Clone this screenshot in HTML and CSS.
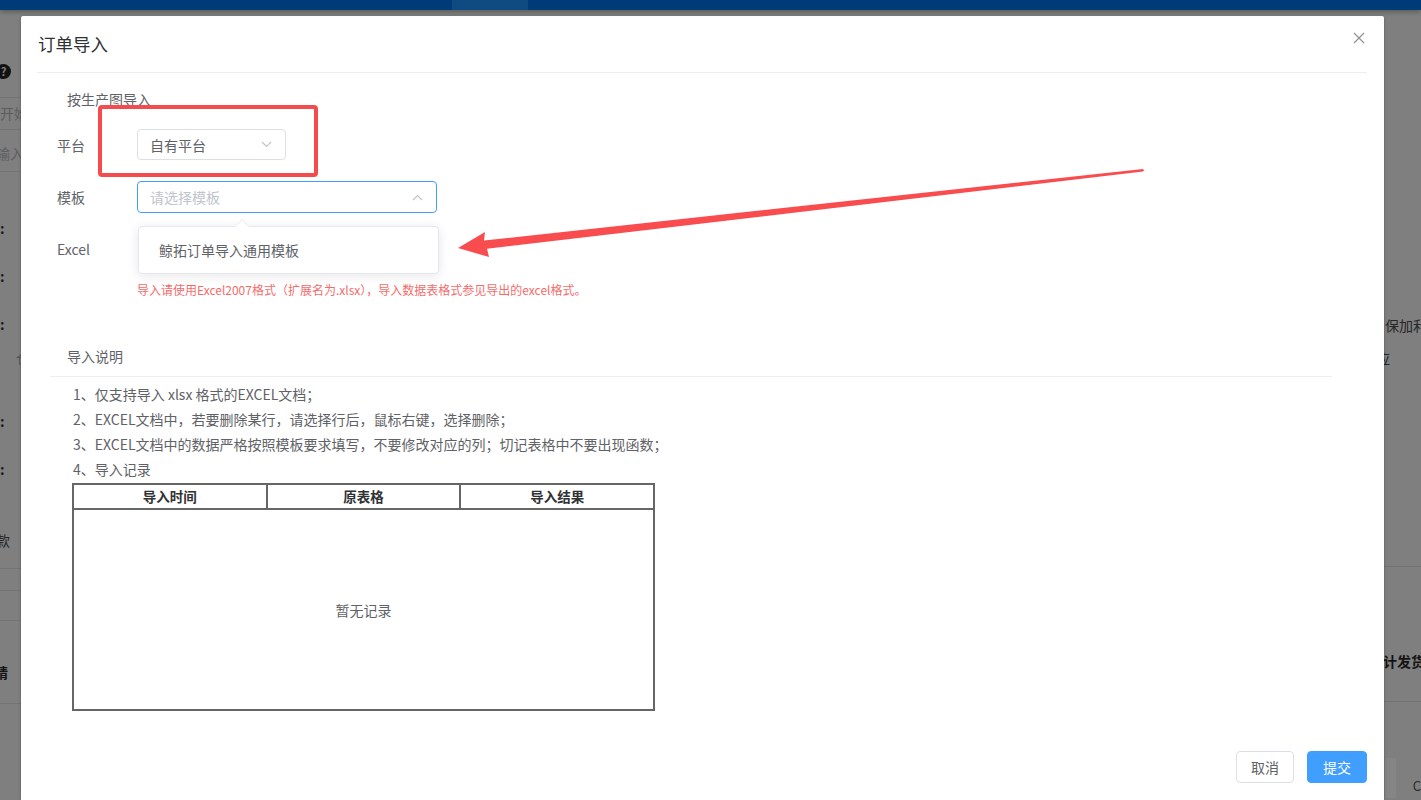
FILE: index.html
```html
<!DOCTYPE html>
<html lang="zh-CN">
<head>
<meta charset="utf-8">
<title>订单导入</title>
<link rel="stylesheet" href="styles.css">
</head>
<body>
<div class="page">
  <div class="topbar"><div class="topbar-tab"></div></div>
  <div class="page-body">
    <div class="strip strip-left">
      <div class="blk h50"></div>
      <div class="blk h16"><span class="help-icon">?</span></div>
      <div class="blk h21"></div>
      <div class="hline"></div>
      <div class="blk h31 txt-ph ml-0">开始</div>
      <div class="hline"></div>
      <div class="blk h41 txt-ph ml-n4 pt5">输入</div>
      <div class="hline"></div>
      <div class="blk h32"></div>
      <div class="blk h48 txt-colon">:</div>
      <div class="blk h48 txt-colon">:</div>
      <div class="blk h48 txt-colon">:</div>
      <div class="blk h20 txt-faint ml-16">仓</div>
      <div class="blk h29"></div>
      <div class="blk h48 txt-colon">:</div>
      <div class="blk h48 txt-colon">:</div>
      <div class="blk h35"></div>
      <div class="blk h24 txt-dark ml-n4">款</div>
      <div class="blk h16"></div>
      <div class="hline"></div>
      <div class="blk h21"></div>
      <div class="hline"></div>
      <div class="blk h29"></div>
      <div class="hline"></div>
      <div class="blk h39"></div>
      <div class="blk h24 txt-bold ml-n6">精</div>
      <div class="blk h19"></div>
      <div class="hline"></div>
    </div>
    <div class="strip strip-right">
      <div class="blk h303"></div>
      <div class="blk h24 txt-dark ml-1">保加利亚</div>
      <div class="blk h9"></div>
      <div class="blk h24 txt-dark ml-n8">应</div>
      <div class="blk h196"></div>
      <div class="hline"></div>
      <div class="blk h82"></div>
      <div class="blk h24 txt-bold ml-n1">计发货</div>
      <div class="blk h28"></div>
      <div class="hline"></div>
      <div class="blk h56"></div>
      <div class="blk h40 bottom-row"><span class="ghost-box"></span><span class="ghost-c">C</span></div>
    </div>
  </div>
</div>

<div class="dialog">
  <div class="dialog-header">
    <span class="dialog-title">订单导入</span>
    <span class="dialog-close">
      <svg width="12" height="12" viewBox="0 0 12 12"><path d="M1 1L11 11M11 1L1 11" stroke="#909399" stroke-width="1.3" fill="none"/></svg>
    </span>
  </div>
  <div class="dialog-body">
    <div class="tab-label">按生产图导入</div>
    <div class="form">
      <div class="form-row">
        <label class="form-label">平台</label>
        <div class="form-content">
          <div class="select select-sm">
            <span class="select-value">自有平台</span>
            <svg class="chev" width="11" height="7" viewBox="0 0 11 7"><path d="M1 1L5.5 5.5L10 1" stroke="#c0c4cc" stroke-width="1.2" fill="none"/></svg>
          </div>
        </div>
      </div>
      <div class="form-row">
        <label class="form-label">模板</label>
        <div class="form-content">
          <div class="select select-lg is-focus">
            <span class="select-placeholder">请选择模板</span>
            <svg class="chev" width="11" height="7" viewBox="0 0 11 7"><path d="M1 6L5.5 1.5L10 6" stroke="#c0c4cc" stroke-width="1.2" fill="none"/></svg>
            <div class="dropdown">
              <span class="dropdown-arrow"></span>
              <div class="dropdown-item">鲸拓订单导入通用模板</div>
            </div>
          </div>
        </div>
      </div>
      <div class="form-row">
        <label class="form-label">Excel</label>
        <div class="form-content"></div>
      </div>
      <div class="form-hint">导入请使用Excel2007格式（扩展名为.xlsx），导入数据表格式参见导出的excel格式。</div>
    </div>

    <div class="notes">
      <div class="notes-title">导入说明</div>
      <ul class="notes-list">
        <li>1、仅支持导入 xlsx 格式的EXCEL文档；</li>
        <li>2、EXCEL文档中，若要删除某行，请选择行后，鼠标右键，选择删除；</li>
        <li>3、EXCEL文档中的数据严格按照模板要求填写，不要修改对应的列；切记表格中不要出现函数；</li>
        <li>4、导入记录</li>
      </ul>
      <table class="records">
        <thead>
          <tr><th>导入时间</th><th>原表格</th><th>导入结果</th></tr>
        </thead>
        <tbody>
          <tr><td colspan="3" class="empty">暂无记录</td></tr>
        </tbody>
      </table>
    </div>
  </div>
  <div class="dialog-footer">
    <button class="btn btn-default">取消</button>
    <button class="btn btn-primary">提交</button>
  </div>
</div>

<svg class="annotation" width="1421" height="800" viewBox="0 0 1421 800">
  <rect x="100" y="107" width="216" height="68" rx="2" ry="2" fill="none" stroke="#f44b4f" stroke-width="4"/>
  <polygon fill="#f84c4f" points="458,248 485,232 484,240.5 1143,169 1144,170.2 1143,171.6 487,248.8 489,257"/>
</svg>
</body>
</html>
```

FILE: styles.css
```css
* { box-sizing: border-box; }

html, body {
  margin: 0;
  padding: 0;
}

body {
  width: 1421px;
  height: 800px;
  overflow: hidden;
  position: relative;
  background: #7f7f7f;
  font-family: "Noto Sans CJK SC", "Noto Sans", sans-serif;
  color: #606266;
}

/* ---------- dimmed page behind the dialog ---------- */
.page {
  width: 1421px;
  height: 800px;
  display: flex;
  flex-direction: column;
}

.topbar {
  height: 10px;
  background: #003b78;
  display: flex;
  padding-left: 452px;
  box-shadow: 0 2px 5px rgba(0, 0, 0, 0.28);
  position: relative;
  z-index: 1;
}

.topbar-tab {
  width: 76px;
  height: 10px;
  background: #0f4a80;
}

.page-body {
  flex: 1;
  display: flex;
  justify-content: space-between;
  background: #7f7f7f;
}

.strip {
  display: flex;
  flex-direction: column;
  overflow: hidden;
  white-space: nowrap;
}

.strip-left { width: 21px; }
.strip-right { width: 37px; }

.blk { flex: none; font-size: 14px; }
.h9 { height: 9px; }
.h16 { height: 16px; }
.h19 { height: 19px; }
.h20 { height: 20px; line-height: 20px; }
.h21 { height: 21px; }
.h24 { height: 24px; line-height: 24px; }
.h28 { height: 28px; }
.h29 { height: 29px; }
.h31 { height: 31px; line-height: 31px; }
.h32 { height: 32px; }
.h35 { height: 35px; }
.h39 { height: 39px; }
.h40 { height: 40px; }
.h41 { height: 41px; line-height: 36px; }
.h48 { height: 48px; line-height: 48px; }
.h50 { height: 50px; }
.h56 { height: 56px; }
.h82 { height: 82px; }
.h196 { height: 196px; }
.h303 { height: 303px; }
.pt5 { padding-top: 5px; }

.ml-0 { margin-left: 0; }
.ml-1 { margin-left: 1px; }
.ml-16 { margin-left: 16px; }
.ml-n1 { margin-left: -1px; }
.ml-n4 { margin-left: -4px; }
.ml-n6 { margin-left: -6px; }
.ml-n8 { margin-left: -8px; }

.hline {
  flex: none;
  height: 1px;
  background: #727374;
}

.help-icon {
  display: inline-flex;
  align-items: center;
  justify-content: center;
  width: 15px;
  height: 15px;
  margin-left: -4px;
  border-radius: 50%;
  background: #121212;
  color: #7f7f7f;
  font-size: 11px;
  font-weight: 700;
  line-height: 1;
}

.txt-ph { color: #5c5d60; }
.txt-colon { color: #1a1a1a; font-weight: 700; }
.txt-faint { color: #55565a; font-size: 13px; }
.txt-dark { color: #262626; }
.txt-bold { color: #141414; font-weight: 700; }

.bottom-row {
  display: flex;
  align-items: flex-end;
}

.ghost-box {
  width: 14px;
  height: 40px;
  margin-left: 1px;
  background: #858585;
}

.ghost-c {
  margin-left: 17px;
  font-size: 13px;
  color: #2a2a2a;
  line-height: 24px;
}

/* ---------- dialog ---------- */
.dialog {
  position: absolute;
  left: 21px;
  top: 16px;
  width: 1363px;
  height: 784px;
  background: #ffffff;
  border-radius: 2px 2px 0 0;
  box-shadow: 0 1px 3px rgba(0, 0, 0, 0.3);
  display: flex;
  flex-direction: column;
}

.dialog-header {
  height: 57px;
  margin: 0 17px 0 16px;
  border-bottom: 1px solid #ebeef5;
  display: flex;
  justify-content: space-between;
  align-items: center;
}

.dialog-title {
  padding-left: 1px;
  font-size: 17.5px;
  line-height: 24px;
  color: #303133;
}

.dialog-close {
  display: flex;
  align-self: flex-start;
  margin-top: 16px;
  margin-right: 2px;
}

.dialog-body {
  padding-top: 16px;
}

.tab-label {
  margin-left: 46px;
  font-size: 14px;
  line-height: 20px;
  color: #606266;
}

.form {
  margin: 20px 0 0 36px;
}

.form-row {
  display: flex;
  height: 32px;
  margin-bottom: 20px;
}

.form-row:nth-child(3) { margin-bottom: 15px; }

.form-label {
  width: 80px;
  flex: none;
  font-size: 14px;
  line-height: 32px;
  color: #606266;
}

.form-content {
  flex: none;
}

.select {
  position: relative;
  height: 32px;
  border: 1px solid #dcdfe6;
  border-radius: 4px;
  display: flex;
  align-items: center;
  justify-content: space-between;
  padding: 0 13px 0 12px;
  font-size: 14px;
}

.select-sm { width: 149px; height: 31px; }
.select-lg { width: 300px; }

.select.is-focus { border-color: #409eff; }

.select-value { color: #606266; }
.select-placeholder { color: #c0c4cc; }

.chev { flex: none; }

.dropdown {
  position: absolute;
  left: 0;
  top: 44px;
  width: 301px;
  background: #ffffff;
  border: 1px solid #e4e7ed;
  border-radius: 4px;
  box-shadow: 0 2px 12px rgba(0, 0, 0, 0.1);
  padding: 6px 0;
  z-index: 2;
}

.dropdown-arrow {
  position: absolute;
  left: 98px;
  top: -6px;
  width: 10px;
  height: 10px;
  background: #ffffff;
  border-left: 1px solid #ebeef5;
  border-top: 1px solid #ebeef5;
  transform: rotate(45deg);
}

.dropdown-item {
  padding: 0 20px;
  line-height: 34px;
  font-size: 14px;
  color: #606266;
}

.form-hint {
  margin-left: 80px;
  font-size: 12px;
  line-height: 20px;
  color: #f56c6c;
}

.notes {
  margin: 46px 52px 0 29px;
}

.notes-title {
  padding: 0 0 10px 17px;
  font-size: 14px;
  line-height: 20px;
  color: #606266;
  border-bottom: 1px solid #ebeef5;
}

.notes-list {
  list-style: none;
  margin: 5px 0 0 0;
  padding: 0 0 0 23px;
}

.notes-list li {
  font-size: 14px;
  line-height: 25px;
  color: #606266;
}

.records {
  margin: 1px 0 0 22px;
  width: 583px;
  border-collapse: collapse;
  border: 2px solid #666666;
  table-layout: fixed;
}

.records th {
  height: 25px;
  padding: 0;
  border: 2px solid #666666;
  font-size: 13.5px;
  font-weight: 700;
  color: #303133;
  text-align: center;
  line-height: 21px;
}

.records td.empty {
  height: 201px;
  padding: 0;
  text-align: center;
  font-size: 14px;
  color: #606266;
}

.dialog-footer {
  display: flex;
  justify-content: flex-end;
  gap: 13px;
  padding: 40px 17px 0 0;
}

.btn {
  height: 32px;
  padding: 0;
  border-radius: 4px;
  font-family: inherit;
  font-size: 14px;
  line-height: 30px;
  text-align: center;
  white-space: nowrap;
  cursor: pointer;
}

.btn-default {
  width: 58px;
  background: #ffffff;
  border: 1px solid #dcdfe6;
  color: #606266;
}

.btn-primary {
  width: 60px;
  background: #409eff;
  border: 1px solid #409eff;
  color: #ffffff;
}

/* ---------- annotation overlay ---------- */
.annotation {
  position: absolute;
  left: 0;
  top: 0;
  pointer-events: none;
}
```
